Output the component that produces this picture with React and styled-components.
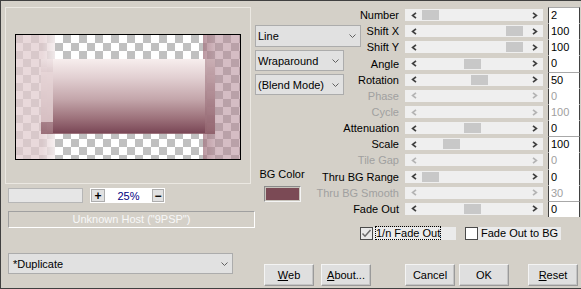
import styled, { createGlobalStyle } from 'styled-components';

const GlobalStyle = createGlobalStyle`
  html, body {
    margin: 0;
    padding: 0;
    background: #d4d0c8;
  }
  body {
    font-family: "Liberation Sans", Arial, sans-serif;
    font-size: 11px;
    color: #000;
  }
  * {
    box-sizing: border-box;
  }
`;

const PARAMS = [
  { label: 'Number', value: '2', pos: 0, group: true },
  { label: 'Shift X', value: '100', pos: 1 },
  { label: 'Shift Y', value: '100', pos: 1 },
  { label: 'Angle', value: '0', pos: 0.5 },
  { label: 'Rotation', value: '50', pos: 0.58, group: true },
  { label: 'Phase', value: '0', disabled: true },
  { label: 'Cycle', value: '100', disabled: true },
  { label: 'Attenuation', value: '0', pos: 0.5 },
  { label: 'Scale', value: '100', pos: 0.25, group: true },
  { label: 'Tile Gap', value: '0', disabled: true },
  { label: 'Thru BG Range', value: '0', pos: 0 },
  { label: 'Thru BG Smooth', value: '30', disabled: true },
  { label: 'Fade Out', value: '0', pos: 0.5, group: true },
];

function Chevron() {
  return (
    <svg width="7" height="4" viewBox="0 0 7 4">
      <polyline points="0.5,0.5 3.5,3.5 6.5,0.5" fill="none" stroke="#606060" strokeWidth="1" />
    </svg>
  );
}

function Arrow({ dir, disabled }) {
  const pts = dir === 'left' ? '5,0.8 1.6,3.5 5,6.2' : '1,0.8 4.4,3.5 1,6.2';
  return (
    <svg width="6" height="7" viewBox="0 0 6 7">
      <polyline
        points={pts}
        fill="none"
        stroke={disabled ? '#b4b4b4' : '#404040'}
        strokeWidth="1.7"
      />
    </svg>
  );
}

function Preview() {
  return (
    <svg width="224" height="124" viewBox="0 0 224 124" style={{ display: 'block' }}>
      <defs>
        <pattern id="chk" x="-1" y="0" width="16" height="16" patternUnits="userSpaceOnUse">
          <rect width="16" height="16" fill="#ffffff" />
          <rect width="8" height="8" fill="#c0c0c0" />
          <rect x="8" y="8" width="8" height="8" fill="#c0c0c0" />
        </pattern>
        <linearGradient id="bodyGrad" x1="0" y1="0" x2="0" y2="1">
          <stop offset="0" stopColor="#f7eeee" />
          <stop offset="0.25" stopColor="#e2d0d2" />
          <stop offset="0.55" stopColor="#c3a5aa" />
          <stop offset="0.8" stopColor="#9d727b" />
          <stop offset="1" stopColor="#7a4756" />
        </linearGradient>
        <linearGradient id="frameGrad" x1="0" y1="0" x2="0" y2="1">
          <stop offset="0" stopColor="#efe2e3" stopOpacity="0.85" />
          <stop offset="1" stopColor="#8c5c67" stopOpacity="0.85" />
        </linearGradient>
        <linearGradient id="leftFade" x1="0" y1="0" x2="1" y2="0">
          <stop offset="0" stopColor="#ffffff" stopOpacity="0" />
          <stop offset="1" stopColor="#ffffff" stopOpacity="0.6" />
        </linearGradient>
        <linearGradient id="rightFade" x1="0" y1="0" x2="1" y2="0">
          <stop offset="0" stopColor="#9a6a75" stopOpacity="0.45" />
          <stop offset="1" stopColor="#9a6a75" stopOpacity="0" />
        </linearGradient>
      </defs>
      <rect width="224" height="124" fill="url(#chk)" />
      <rect x="0" y="0" width="39" height="124" fill="rgb(224,203,205)" opacity="0.72" />
      <rect x="26" y="0" width="13" height="124" fill="url(#leftFade)" />
      <rect x="187" y="0" width="37" height="124" fill="rgb(179,135,148)" opacity="0.55" />
      <rect x="187" y="0" width="14" height="124" fill="url(#rightFade)" />
      <rect x="25" y="24" width="174" height="75" fill="url(#frameGrad)" />
      <rect x="25" y="37" width="12" height="50" fill="#ead8da" opacity="0.7" />
      <rect x="37" y="24" width="152" height="74" fill="url(#bodyGrad)" />
      <rect x="189" y="24" width="10" height="75" fill="#8e5f69" opacity="0.35" />
    </svg>
  );
}

function App() {
  return (
    <>
      <GlobalStyle />
      <Window>
        <LeftPanel>
          <Frame>
            <PreviewBox>
              <Preview />
            </PreviewBox>
          </Frame>
          <ZoomRow>
            <ZoomField />
            <ZoomBox>
              <ZoomButton>+</ZoomButton>
              <ZoomValue>25%</ZoomValue>
              <ZoomButton $narrow>&minus;</ZoomButton>
            </ZoomBox>
          </ZoomRow>
          <HostField>Unknown Host ("9PSP")</HostField>
          <Combo $width={225} $height={21} $top={25} $left={7} $pad={4}>
            <span>*Duplicate</span>
            <Chevron />
          </Combo>
        </LeftPanel>

        <RightPanel>
          <TopArea>
            <ParamList>
              {PARAMS.map((p) => (
                <ParamRow key={p.label}>
                  <ParamLabel $disabled={p.disabled}>{p.label}</ParamLabel>
                  <Track>
                    <ArrowCell>
                      <Arrow dir="left" disabled={p.disabled} />
                    </ArrowCell>
                    <Trough>
                      {!p.disabled && (
                        <Thumb style={{ marginLeft: Math.round(p.pos * 84) }} />
                      )}
                    </Trough>
                    <ArrowCell>
                      <Arrow dir="right" disabled={p.disabled} />
                    </ArrowCell>
                  </Track>
                  <ValueCell $group={p.group} $disabled={p.disabled}>
                    {p.value}
                  </ValueCell>
                </ParamRow>
              ))}
            </ParamList>

            <MiddleColumn>
              <Combo $width={106} $height={22} $top={24} $pad={2}>
                <span>Line</span>
                <Chevron />
              </Combo>
              <Combo $width={89} $height={21} $top={3} $pad={2}>
                <span>Wraparound</span>
                <Chevron />
              </Combo>
              <Combo $width={89} $height={21} $top={3} $pad={2}>
                <span>(Blend Mode)</span>
                <Chevron />
              </Combo>
              <ColorBlock>
                <ColorLabel>BG Color</ColorLabel>
                <Swatch />
              </ColorBlock>
            </MiddleColumn>
          </TopArea>

          <CheckRow>
            <CheckItem>
              <CheckBox $checked>
                <svg width="11" height="11" viewBox="0 0 11 11">
                  <polyline points="1.5,5.5 4,8.2 9.5,2" fill="none" stroke="#6a6a6a" strokeWidth="1.5" />
                </svg>
              </CheckBox>
              <CheckLabel>
                <Focus>1/n Fade Out</Focus>
              </CheckLabel>
            </CheckItem>
            <CheckItem $gap={9}>
              <CheckBox />
              <CheckLabel>Fade Out to BG</CheckLabel>
            </CheckItem>
          </CheckRow>

          <ButtonRow>
            <Button>
              <u>W</u>eb
            </Button>
            <Button $gap={7}>
              <u>A</u>bout...
            </Button>
            <Button $gap={34}>Cancel</Button>
            <Button $gap={4}>OK</Button>
            <Button $gap={19}>
              <u>R</u>eset
            </Button>
          </ButtonRow>
        </RightPanel>
      </Window>
    </>
  );
}

const Window = styled.div`
  display: flex;
  width: 581px;
  height: 289px;
  background: #d4d0c8;
  border-top: 1px solid #404040;
  border-left: 1px solid #404040;
  border-bottom: 1px solid #404040;
  overflow: hidden;
`;

const LeftPanel = styled.div`
  display: flex;
  flex-direction: column;
  width: 254px;
  flex-shrink: 0;
`;

const Frame = styled.div`
  width: 246px;
  height: 177px;
  margin: 6px 0 0 4px;
  padding: 26px 0 0 9px;
  border: 1px solid #ebe8e2;
`;

const PreviewBox = styled.div`
  width: 226px;
  height: 126px;
  border: 1px solid #000;
`;

const ZoomRow = styled.div`
  display: flex;
  align-items: center;
  gap: 7px;
  margin-top: 4px;
  padding-left: 7px;
`;

const ZoomField = styled.div`
  width: 75px;
  height: 15px;
  background: #e6e6e6;
  border: 1px solid #b6b6b6;
`;

const ZoomBox = styled.div`
  display: flex;
  align-items: center;
  width: 75px;
  height: 15px;
  padding: 0 1px;
  background: #fff;
`;

const ZoomButton = styled.div`
  display: flex;
  align-items: center;
  justify-content: center;
  width: ${({ $narrow }) => ($narrow ? 12 : 14)}px;
  height: 13px;
  background: #e1e1e1;
  border: 1px solid #adadad;
  font-size: 12px;
  font-weight: bold;
  line-height: 1;
`;

const ZoomValue = styled.div`
  flex: 1;
  text-align: center;
  color: #000080;
  font-size: 11px;
`;

const HostField = styled.div`
  width: 247px;
  height: 17px;
  margin: 8px 0 0 7px;
  border: 1px solid;
  border-color: #a0a0a0 #fff #fff #a0a0a0;
  color: #f8f8f8;
  text-align: center;
  line-height: 15px;
  white-space: nowrap;
`;

const Combo = styled.div`
  display: flex;
  align-items: center;
  justify-content: space-between;
  width: ${({ $width }) => $width}px;
  height: ${({ $height }) => $height}px;
  margin-top: ${({ $top }) => $top}px;
  margin-left: ${({ $left }) => $left || 0}px;
  padding: 0 4px 0 ${({ $pad }) => $pad}px;
  background: #e1e1e1;
  border: 1px solid #acacac;
  white-space: nowrap;
`;

const RightPanel = styled.div`
  display: flex;
  flex-direction: column;
  flex: 1;
`;

const TopArea = styled.div`
  display: grid;

  & > * {
    grid-area: 1 / 1;
  }
`;

const ParamList = styled.div`
  display: flex;
  flex-direction: column;
  padding-top: 6px;
`;

const ParamRow = styled.div`
  display: flex;
  align-items: center;
  height: 16.17px;
`;

const ParamLabel = styled.div`
  width: 144px;
  text-align: right;
  white-space: nowrap;
  color: ${({ $disabled }) => ($disabled ? '#a0a0a0' : '#000')};
`;

const Track = styled.div`
  display: flex;
  align-items: center;
  width: 138px;
  height: 12px;
  margin-left: 6px;
  background: #efefef;
`;

const ArrowCell = styled.div`
  display: flex;
  align-items: center;
  justify-content: center;
  width: 17px;
  height: 100%;
  flex-shrink: 0;
`;

const Trough = styled.div`
  display: flex;
  align-items: center;
  flex: 1;
  height: 100%;
`;

const Thumb = styled.div`
  width: 17px;
  height: 10px;
  background: #c8c8c8;
`;

const ValueCell = styled.div`
  width: 32px;
  height: 100%;
  margin-left: 5px;
  padding-left: 2px;
  background: #fff;
  border-left: 1px solid #404040;
  border-right: 1px solid #404040;
  border-top: 1px solid ${({ $group }) => ($group ? '#a8a8a8' : '#fff')};
  color: ${({ $disabled }) => ($disabled ? '#a0a0a0' : '#000')};
  line-height: 14px;
`;

const MiddleColumn = styled.div`
  display: flex;
  flex-direction: column;
  align-items: flex-start;
  pointer-events: none;
`;

const ColorBlock = styled.div`
  display: flex;
  flex-direction: column;
  align-items: center;
  width: 54px;
  margin-top: 73px;
`;

const ColorLabel = styled.div`
  line-height: 13px;
  white-space: nowrap;
`;

const Swatch = styled.div`
  width: 37px;
  height: 16px;
  margin-top: 5px;
  background: #7b4a55;
  border: 1px solid;
  border-color: #8a8a8a #f4f4f4 #f4f4f4 #8a8a8a;
  box-shadow: inset 0 0 0 1px #c8c4bc;
`;

const CheckRow = styled.div`
  display: flex;
  align-items: center;
  height: 13px;
  margin-top: 10px;
  padding-left: 105px;
`;

const CheckItem = styled.div`
  display: flex;
  align-items: center;
  margin-left: ${({ $gap }) => $gap || 0}px;
`;

const CheckBox = styled.div`
  display: flex;
  align-items: center;
  justify-content: center;
  width: 13px;
  height: 13px;
  background: ${({ $checked }) => ($checked ? '#e8e8e8' : '#fff')};
  border: 1px solid #4a4a4a;
`;

const CheckLabel = styled.div`
  width: 83px;
  height: 13px;
  padding-left: 3px;
  background: #ebebeb;
  line-height: 13px;
  white-space: nowrap;
`;

const Focus = styled.span`
  outline: 1px dotted #000;
  outline-offset: 0;
`;

const ButtonRow = styled.div`
  display: flex;
  margin-top: 24px;
  padding-left: 9px;
`;

const Button = styled.div`
  display: flex;
  align-items: center;
  justify-content: center;
  width: 50px;
  height: 22px;
  margin-left: ${({ $gap }) => $gap || 0}px;
  background: #dfdfdf;
  border: 1px solid;
  border-color: #f4f4f4 #9a9a9a #9a9a9a #f4f4f4;
  box-shadow: inset -1px -1px #c4c4c4;
  white-space: nowrap;

  u {
    text-decoration: underline;
  }
`;

export default App;
